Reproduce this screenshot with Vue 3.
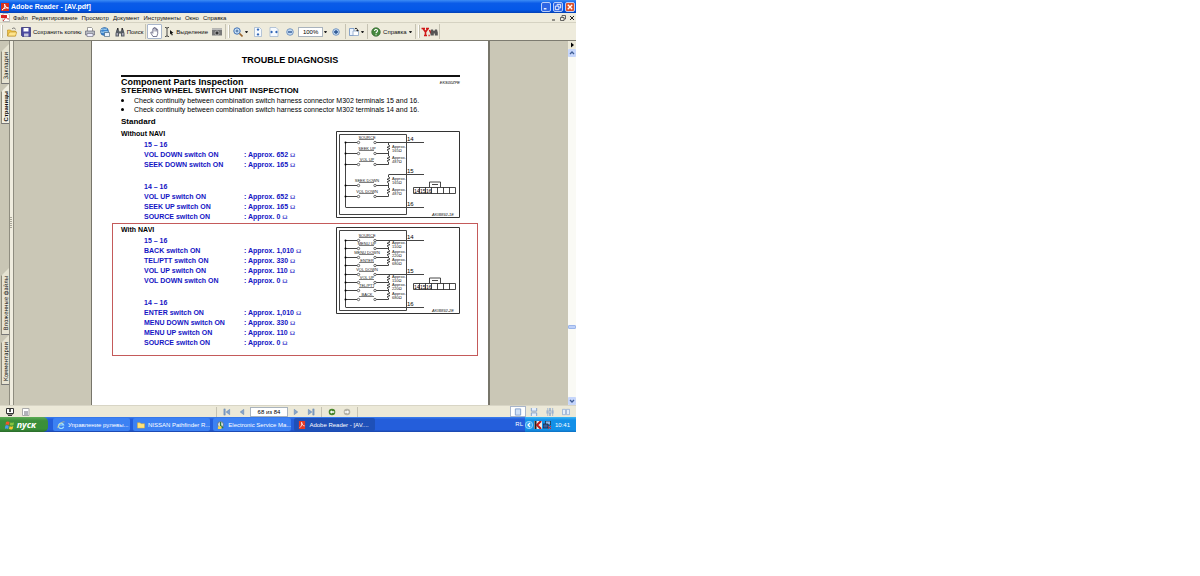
<script setup>
import { ref } from 'vue'

const menus = ['Файл', 'Редактирование', 'Просмотр', 'Документ', 'Инструменты', 'Окно', 'Справка']
const topTabs = [{ t: 'Закладки' }, { t: 'Страницы', on: true }]
const bottomTabs = ['Вложенные файлы', 'Комментарии']
const zoom = ref('100%')
const pageNo = ref('68 из 84')

const sections = [
  {
    title: 'Without NAVI',
    marked: false,
    groups: [
      { pins: '15 – 16', rows: [['VOL DOWN', '652'], ['SEEK DOWN', '165']] },
      { pins: '14 – 16', rows: [['VOL UP', '652'], ['SEEK UP', '165'], ['SOURCE', '0']] },
    ],
    fig: {
      code: 'AKIB892-1E',
      rows: [
        { y: 11, t: 'SOURCE' }, { y: 22, t: 'SEEK UP' }, { y: 33, t: 'VOL UP' },
        { y: 54, t: 'SEEK DOWN' }, { y: 65, t: 'VOL DOWN' },
      ],
      buses: [[11, 33], [43, 65]],
      pins: [{ y: 11, x: 39, n: 14 }, { y: 43, x: 52, n: 15 }, { y: 76, x: 9, n: 16 }],
      res: [{ y: 17, v: 165 }, { y: 28, v: 487 }, { y: 49, v: 165 }, { y: 60, v: 487 }],
    },
  },
  {
    title: 'With NAVI',
    marked: true,
    groups: [
      { pins: '15 – 16', rows: [['BACK', '1,010'], ['TEL/PTT', '330'], ['VOL UP', '110'], ['VOL DOWN', '0']] },
      { pins: '14 – 16', rows: [['ENTER', '1,010'], ['MENU DOWN', '330'], ['MENU UP', '110'], ['SOURCE', '0']] },
    ],
    fig: {
      code: 'AKIB892-2E',
      rows: [
        { y: 13, t: 'SOURCE' }, { y: 21, t: 'MENU UP' }, { y: 30, t: 'MENU DOWN' }, { y: 38, t: 'ENTER' },
        { y: 47, t: 'VOL DOWN' }, { y: 55, t: 'VOL UP' }, { y: 63, t: 'TEL/PTT' }, { y: 72, t: 'BACK' },
      ],
      buses: [[13, 38], [47, 72]],
      pins: [{ y: 13, x: 39, n: 14 }, { y: 47, x: 39, n: 15 }, { y: 80, x: 9, n: 16 }],
      res: [{ y: 17, v: 110 }, { y: 26, v: 220 }, { y: 34, v: 680 }, { y: 51, v: 110 }, { y: 59, v: 220 }, { y: 68, v: 680 }],
    },
  },
]
</script>

<template>
  <div class="desktop">
    <header class="titlebar">
      <svg class="ic8" viewBox="0 0 8 8"><rect width="8" height="8" fill="#d8301c" /><path d="M1 7C4 5 4 3 3.500 1C4 4 6 5 7.500 5C5 4.500 3 5 1 7" fill="none" stroke="#fff" /></svg>
      <h1>Adobe Reader - [AV.pdf]</h1>
      <div class="winbtns">
        <button aria-label="Свернуть"><svg viewBox="0 0 9 9"><path d="M2 6.500h3" stroke="#fff" stroke-width="1.500" /></svg></button>
        <button aria-label="Восстановить"><svg viewBox="0 0 9 9"><path d="M3.500 3V1.500h4v4H6M1.500 3.500h4v4h-4z" fill="none" stroke="#fff" /></svg></button>
        <button class="close" aria-label="Закрыть"><svg viewBox="0 0 9 9"><path d="M2 2l5 5M7 2l-5 5" stroke="#fff" stroke-width="1.500" /></svg></button>
      </div>
    </header>

    <nav class="menubar">
      <svg class="ic9" viewBox="0 0 9 9"><path d="M2 .5h5l1.500 1.500v6.500H2z" fill="#fff" stroke="#999" stroke-width=".6" /><path d="M0 2h6v3H0z" fill="#d22" /><path d="M2 8C4 6 5 4 4.500 3C5 5 6 6 8 6" fill="none" stroke="#c22" stroke-width=".9" /></svg>
      <button v-for="m in menus" :key="m">{{ m }}</button>
      <div class="docbtns">
        <button aria-label="Свернуть документ"><svg viewBox="0 0 8 8"><path d="M2 6h3" stroke="#333" /></svg></button>
        <button aria-label="Восстановить документ"><svg viewBox="0 0 8 8"><path d="M3 3V1.500h3.500V5H5M1.500 3.500H5V6.500H1.500z" fill="none" stroke="#444" stroke-width=".8" /></svg></button>
        <button aria-label="Закрыть документ"><svg viewBox="0 0 8 8"><path d="M2 2l4 4M6 2l-4 4" stroke="#222" /></svg></button>
      </div>
    </nav>

    <div class="toolbar">
      <i class="grip"></i>
      <button aria-label="Открыть"><svg viewBox="0 0 10 10"><path d="M.5 9V3h3l1 1h4v5z" fill="#f5c94a" stroke="#b88a1c" stroke-width=".6" /><path d="M.5 9l2-4h7.300l-1.300 4z" fill="#ffe58c" stroke="#b88a1c" stroke-width=".6" /><path d="M5 2c1-1.500 3-1.500 3.500.5" fill="none" stroke="#555" stroke-width=".7" /></svg></button>
      <button class="wide"><svg viewBox="0 0 10 10"><path d="M.5.500h9v9h-8l-1-1z" fill="#4b49a0" stroke="#2d2b70" stroke-width=".7" /><path d="M2.500 1h5v3.500h-5z" fill="#fff" /><path d="M3 6.500h4.500v3H3z" fill="#c9c9dd" /></svg>Сохранить копию</button>
      <button aria-label="Печать"><svg viewBox="0 0 10 10"><path d="M2.500 4V.5h4l1 1V4" fill="#fff" stroke="#777" stroke-width=".7" /><path d="M.5 4h9v4h-9z" fill="#b9bdc4" stroke="#667" stroke-width=".7" /><path d="M2 6.500h6v3H2z" fill="#eef" stroke="#667" stroke-width=".6" /></svg></button>
      <button aria-label="Веб"><svg viewBox="0 0 10 10"><circle cx="4.500" cy="4.500" r="4" fill="#3d86cf" stroke="#245c9a" stroke-width=".6" /><path d="M1 3c2-2 3 0 6-1M1 5c2 1 4-1 7 0" fill="none" stroke="#bfe2f5" /><path d="M4.500 5.500h5v4h-5z" fill="#eaf2fa" stroke="#357" stroke-width=".6" /></svg></button>
      <button class="wide"><svg viewBox="0 0 10 10"><path d="M1.500 2.500h2l1 2h1l1-2h2l1 4v3H6V6.500H4v3H.5v-3z" fill="#555b63" /><path d="M2 1h1.500v2H2zM6.500 1H8v2H6.500z" fill="#333" /><path d="M1.500 6h1.500v2.500H1.500zM7 6h1.500v2.500H7z" fill="#aab" /></svg>Поиск</button>
      <i class="sep"></i>
      <button class="on" aria-label="Рука"><svg viewBox="0 0 10 10"><path d="M3 9.500L.8 6c-.4-.9.600-1.300 1.200-.5l.8.800V2c0-.9 1.200-.9 1.200 0V1c0-.9 1.300-.9 1.300 0v.7c0-.8 1.200-.8 1.200.1v.9c0-.8 1.200-.7 1.200.2v3.600L6.800 9.500z" fill="#fff" stroke="#446" stroke-width=".7" /><path d="M4 2v2.500M5.300 2v2.500M6.500 2.500v2" stroke="#446" stroke-width=".5" /></svg></button>
      <button class="wide"><svg viewBox="0 0 10 10"><path d="M1 .5h1l1 .7 1-.7h1M3 1v8M1 9.500h1l1-.7 1 .7h1" fill="none" stroke="#222" stroke-width=".8" /><path d="M6 3l3.500 3H8l.8 2-1 .4L7 6.500 6 7.500z" fill="#111" /></svg>Выделение</button>
      <button aria-label="Снимок"><svg viewBox="0 0 10 10"><path d="M0 1.500h10v7H0z" fill="#777" /><path d="M0 1.500h10v1.500H0z" fill="#bbb" /><circle cx="5" cy="6" r="2" fill="#333" stroke="#ddd" stroke-width=".6" /></svg></button>
      <i class="sep"></i><i class="grip"></i>
      <button class="drop" aria-label="Увеличение"><svg viewBox="0 0 10 10"><circle cx="4" cy="4" r="3.200" fill="#cfe6fb" stroke="#3f6fb0" /><path d="M6.500 6.500L9.500 9.500" stroke="#98642a" stroke-width="1.600" /><path d="M2.500 4h3M4 2.500v3" stroke="#25528e" stroke-width=".8" /></svg><b class="arr"></b></button>
      <button aria-label="Страница целиком"><svg viewBox="0 0 10 10"><path d="M1.500.500h5l2 2v7h-7z" fill="#f6faff" stroke="#9ab0cc" stroke-width=".7" /><path d="M5 1l1.500 2h-3zM5 9L3.500 7h3z" fill="#2b62b5" /><path d="M5 3v1M5 6v1" stroke="#2b62b5" /></svg></button>
      <button aria-label="По ширине"><svg viewBox="0 0 10 10"><path d="M1 .5h6l2 2v7H1z" fill="#f6faff" stroke="#9ab0cc" stroke-width=".7" /><path d="M1 5l2-1.500v3zM9 5L7 3.500v3z" fill="#2b62b5" /><path d="M3 5h1M6 5h1" stroke="#2b62b5" /></svg></button>
      <button aria-label="Уменьшить"><svg viewBox="0 0 10 10"><circle cx="5" cy="5" r="3.300" fill="#c5dbf2" stroke="#6d90bd" stroke-width=".9" /><path d="M3 5h4" stroke="#24508e" stroke-width="1.300" /></svg></button>
      <input v-model="zoom" class="zoom" aria-label="Масштаб" />
      <button class="mini" aria-label="Список масштабов"><b class="arr"></b></button>
      <button aria-label="Увеличить"><svg viewBox="0 0 10 10"><circle cx="5" cy="5" r="3.300" fill="#c5dbf2" stroke="#6d90bd" stroke-width=".9" /><path d="M3 5h4M5 3v4" stroke="#24508e" stroke-width="1.300" /></svg></button>
      <i class="sep"></i>
      <button class="drop" aria-label="Повернуть"><svg viewBox="0 0 10 10"><path d="M.5 1.500h4.500v7H.5z" fill="#eef5ff" stroke="#6b8fc0" stroke-width=".8" /><path d="M4 4h5.500v4.500H4z" fill="#fff" stroke="#8aa5c8" stroke-width=".8" /><path d="M6 1.500c2-.5 2.500.500 2.500 2" fill="none" stroke="#222" /><path d="M7 3h3L8.500 4.500z" fill="#222" /></svg><b class="arr"></b></button>
      <i class="sep"></i>
      <button class="wide drop"><svg viewBox="0 0 10 10"><circle cx="5" cy="5" r="4.300" fill="#45883c" stroke="#2a5c26" stroke-width=".6" /><path d="M3.500 4c0-2.200 3.200-2 3 0C6.400 5 5 5 5 6.300M5 7.200v1" fill="none" stroke="#fff" stroke-width="1.100" /></svg>Справка<b class="arr"></b></button>
      <i class="sep"></i><i class="grip"></i>
      <button class="yahoo" aria-label="Yahoo"><svg viewBox="0 0 17 10"><path d="M.5 1.500h3.500M5 1.500h3M2 1.500l2.500 3.500v3M7 1.500L4.500 5M3 8.500h3" fill="none" stroke="#d01818" stroke-width="1.600" /><path d="M8.500 3L10 6.500M7.500 8.500h1.200" stroke="#d01818" stroke-width="1.500" /><path d="M10 2.500h2l.7 1.500h.6L14 2.500h2l.8 3v3h-3v-2h-1v2H9.500V5.500z" fill="#555" /></svg></button>
      <i class="sep"></i>
    </div>

    <div class="work">
      <div class="tabs">
        <button v-for="t in topTabs" :key="t.t" :class="{ active: t.on }"><span>{{ t.t }}</span></button>
        <i class="fill"></i>
        <button v-for="(t, i) in bottomTabs" :key="t" :class="{ long: i === 0, mid: i === 1 }"><span>{{ t }}</span></button>
      </div>
      <div class="splitter"><i></i></div>

      <main class="canvas">
        <article class="paper">
          <h2>TROUBLE DIAGNOSIS</h2>
          <div class="body">
            <div class="intro">
              <h3>Component Parts Inspection</h3>
              <em>EKS00ZPE</em>
            </div>
            <h4>STEERING WHEEL SWITCH UNIT INSPECTION</h4>
            <ul>
              <li>Check continuity between combination switch harness connector M302 terminals 15 and 16.</li>
              <li>Check continuity between combination switch harness connector M302 terminals 14 and 16.</li>
            </ul>
            <h4 class="std">Standard</h4>
          </div>

          <section v-for="s in sections" :key="s.title" :class="{ marked: s.marked }">
            <div class="spec">
              <h5>{{ s.title }}</h5>
              <table v-for="g in s.groups" :key="g.pins">
                <caption>{{ g.pins }}</caption>
                <tbody>
                  <tr v-for="r in g.rows" :key="r[0]">
                    <th scope="row">{{ r[0] }} switch ON</th>
                    <td>: Approx. {{ r[1] }} <span class="ohm">Ω</span></td>
                  </tr>
                </tbody>
              </table>
            </div>
            <svg class="fig" viewBox="0 0 124 87">
              <g fill="none" stroke="#444" stroke-width="1">
                <path d="M.5.500h123v86H.5z" stroke="#333" />
                <path d="M3.500 3.500h67v80h-67z" />
                <path :d="`M9.500 ${s.fig.rows[0].y + .5}V${s.fig.pins[2].y + .5}`" />
                <path v-for="b in s.fig.buses" :key="b[0]" :d="`M52.500 ${b[0] + .5}V${b[1] + .5}`" />
                <path v-for="p in s.fig.pins" :key="p.n" :d="`M${p.x + 1} ${p.y + .5}H88`" />
                <path v-for="r in s.fig.rows" :key="r.t" :d="`M9.500 ${r.y + .5}H21M40 ${r.y + .5}H52.500`" />
              </g>
              <g v-for="r in s.fig.rows" :key="'s' + r.t">
                <circle cx="22.500" :cy="r.y + .5" r="1.200" class="contact" />
                <circle cx="39" :cy="r.y + .5" r="1.200" class="contact" />
                <circle cx="9.500" :cy="r.y + .5" r="1" />
                <path :d="`M23 ${r.y - 2.5}H38`" stroke="#444" stroke-width=".7" />
                <text x="31" :y="r.y - 3" text-anchor="middle" class="lbl">{{ r.t }}</text>
              </g>
              <g v-for="r in s.fig.res" :key="'r' + r.y">
                <path :d="`M52.500 ${r.y - 3}v6`" stroke="#fff" stroke-width="2" />
                <path :d="`M52.500 ${r.y - 3}l1.500 1-3 1.300 3 1.300-3 1.300 1.500 1`" fill="none" stroke="#222" stroke-width=".8" />
                <text x="56" :y="r.y" class="lbl">Approx.</text>
                <text x="56" :y="r.y + 4" class="lbl">{{ r.v }}Ω</text>
              </g>
              <text v-for="p in s.fig.pins" :key="'p' + p.n" x="71" :y="p.y - 1" class="pin">{{ p.n }}</text>
              <path d="M77.500 56.500h42v6h-42zM83.500 56v7M89.500 56v7M95.500 56v7M101.500 56v7M107.500 56v7M113.500 56v7M93.500 56v-5h11v5M96 53.500h6" fill="none" stroke="#333" stroke-width=".9" />
              <text x="78" y="62" class="cell">14</text><text x="84" y="62" class="cell">15</text><text x="90" y="62" class="cell">16</text>
              <text x="118" y="85" text-anchor="end" class="code">{{ s.fig.code }}</text>
            </svg>
          </section>
        </article>
      </main>

      <div class="scroll">
        <button class="play" aria-label="Меню"><svg viewBox="0 0 8 8"><path d="M3 1.500L6 4L3 6.500z" /></svg></button>
        <button aria-label="Вверх"><svg viewBox="0 0 8 8"><path d="M2 5l2-2 2 2" fill="none" stroke="#3f5d96" stroke-width="1.300" /></svg></button>
        <i class="track upper"></i>
        <i class="thumb"></i>
        <i class="track"></i>
        <button aria-label="Вниз"><svg viewBox="0 0 8 8"><path d="M2 3l2 2 2-2" fill="none" stroke="#3f5d96" stroke-width="1.300" /></svg></button>
      </div>
    </div>

    <div class="status">
      <div class="left">
        <button aria-label="Полный экран"><svg viewBox="0 0 8 8"><path d="M.5.500h7v5h-7zM2 7.500h4M1 6h6" fill="#fff" stroke="#333" /><path d="M3 1h2v3H3z" fill="#555" /></svg></button>
        <button aria-label="Панели"><svg viewBox="0 0 8 8"><path d="M.5.500h6.500v7H.5z" fill="#fff" stroke="#aaa" /><path d="M2 4h4M2 6h4" stroke="#667" /></svg></button>
      </div>
      <div class="pager">
        <button aria-label="Первая"><svg viewBox="0 0 9 8"><path d="M1 .5h1.500v7H1zM7.500 1v6L3.500 4z" fill="#86a5cc" stroke="#5478a8" stroke-width=".5" /></svg></button>
        <button aria-label="Назад"><svg viewBox="0 0 9 8"><path d="M6.500 1v6L2.500 4z" fill="#86a5cc" stroke="#5478a8" stroke-width=".5" /></svg></button>
        <input v-model="pageNo" aria-label="Страница" />
        <button aria-label="Вперёд"><svg viewBox="0 0 9 8"><path d="M2.500 1v6L6.500 4z" fill="#86a5cc" stroke="#5478a8" stroke-width=".5" /></svg></button>
        <button aria-label="Последняя"><svg viewBox="0 0 9 8"><path d="M6.500.500H8v7H6.500zM1.500 1v6L5.500 4z" fill="#86a5cc" stroke="#5478a8" stroke-width=".5" /></svg></button>
        <i class="sep"></i>
        <button aria-label="Предыдущий вид"><svg viewBox="0 0 9 8"><circle cx="4.500" cy="4" r="3.700" fill="#47852c" /><path d="M2 4l2.300-2v1.200H7v1.600H4.300V6z" fill="#fff" /></svg></button>
        <button aria-label="Следующий вид"><svg viewBox="0 0 9 8"><circle cx="4.500" cy="4" r="3.700" fill="#b5b3a6" /><path d="M7 4L4.700 2v1.200H2v1.600h2.700V6z" fill="#fff" /></svg></button>
        <i class="sep"></i>
      </div>
      <div class="views">
        <button class="on" aria-label="Одна страница"><svg viewBox="0 0 9 9"><path d="M1.500 1h6v7h-6z" fill="#cfe0f7" stroke="#7d9cc9" /></svg></button>
        <button aria-label="Непрерывно"><svg viewBox="0 0 9 9"><path d="M1.500 0v3.500h6V0M1.500 9V5.500h6V9" fill="#e5eefa" stroke="#7d9cc9" /></svg></button>
        <button aria-label="Непрерывно, разворот"><svg viewBox="0 0 9 9"><path d="M0 3.500h9M0 5.500h9M2 0v9M4 0v3.500M5 0v3.500M4 5.500V9M5 5.500V9M7.500 0v9" fill="none" stroke="#7d9cc9" stroke-width=".7" /></svg></button>
        <button aria-label="Разворот"><svg viewBox="0 0 9 9"><path d="M.5 1.500h3.500v6H.5zM5 1.500h3.500v6H5z" fill="#e5eefa" stroke="#8aa6cf" stroke-width=".8" /></svg></button>
      </div>
    </div>

    <footer class="taskbar">
      <button class="start"><svg viewBox="0 0 10 10"><path d="M1 2c1.500-1 2.500-.5 3.500 0L4 5C3 4.500 2 4.200.5 5z" fill="#f2552c" /><path d="M5.300 2.400c1.200.6 2.500.6 3.700-.2L8.500 5C7 6 6 5.500 4.800 5z" fill="#8ac43f" /><path d="M.3 5.800c1.500-.8 2.500-.4 3.500 0L3.200 9C2.200 8.400 1 8.200-.2 9z" fill="#4a9af0" /><path d="M4.600 6.200c1.200.6 2.400.6 3.700-.2L7.600 9C6.300 9.800 5 9.500 4 9z" fill="#fbc52d" /></svg>пуск</button>
      <div class="tasks">
        <button><svg viewBox="0 0 9 9"><path d="M7.500 6.500A3 3 0 1 1 7.500 4.500H2.500" fill="none" stroke="#9fe0ff" stroke-width="1.400" /><path d="M1 8C-.5 7 5 0 8.500 1" fill="none" stroke="#f4d35a" stroke-width=".7" /></svg><span>Управление рулевы...</span></button>
        <button><svg viewBox="0 0 9 9"><path d="M.5 8V2h3l1 1h4v5z" fill="#ffe27a" stroke="#d3a93a" stroke-width=".6" /></svg><span>NISSAN Pathfinder R...</span></button>
        <button><svg viewBox="0 0 9 9"><circle cx="4" cy="4" r="3.300" fill="#d5dee4" stroke="#456" stroke-width=".7" /><path d="M4 1v4l3 3" stroke="#2a7d3d" stroke-width="1.400" fill="none" /><path d="M1 6h4v3H1z" fill="#f2d24c" /></svg><span>Electronic Service Ma...</span></button>
        <button class="on"><svg viewBox="0 0 9 9"><path d="M1 0h7v9H1z" fill="#e33a25" /><path d="M2 7.500C4.500 5.500 4.500 3 4 1.500C4.500 4.500 6 5.500 7.500 5.500" fill="none" stroke="#fff" stroke-width=".9" /></svg><span>Adobe Reader - [AV....</span></button>
      </div>
      <div class="lang">RL</div>
      <div class="tray">
        <svg class="ic8" viewBox="0 0 8 8"><circle cx="4" cy="4" r="3.700" fill="#39a7f2" stroke="#c5ecff" stroke-width=".6" /><path d="M5 2L3 4l2 2" fill="none" stroke="#fff" stroke-width="1.200" /></svg>
        <svg class="ic8" viewBox="0 0 8 8"><path d="M0 0h8v8H0z" fill="#e8e8e8" /><path d="M1.500 0v8" stroke="#222" stroke-width="2" /><path d="M7 0L3 4l4 4" fill="none" stroke="#c01818" stroke-width="2" /></svg>
        <svg class="ic8" viewBox="0 0 8 8"><path d="M2.500 0h5v4h-5z" fill="#8bb4e8" stroke="#123" stroke-width=".7" /><path d="M0 3h5v4H0z" fill="#395c9c" stroke="#123" stroke-width=".7" /><path d="M5 5l3 3M8 5L5 8" stroke="#d22" /></svg>
        <time>10:41</time>
      </div>
    </footer>
  </div>
</template>

<style>
body { margin: 0; background: #fff; }
</style>

<style scoped>
* { box-sizing: border-box; }
.desktop { width: 48vw; min-width: 576px; min-height: 75vh; display: flex; flex-direction: column; font: 6px/8px "Liberation Sans", Arial, sans-serif; color: #111; background: #ece9d8; }
button { font: inherit; color: inherit; border: 0; background: none; padding: 0; margin: 0; display: flex; align-items: center; justify-content: center; white-space: nowrap; }
input { font: inherit; border: 1px solid #a9b3bd; background: #fff; padding: 0; text-align: center; min-width: 0; }
svg { display: block; flex: none; }
i { display: block; flex: none; }
h1, h2, h3, h4, h5, ul { margin: 0; padding: 0; }
.ic8 { width: 8px; height: 8px; }
.ic9 { width: 9px; height: 9px; }

.titlebar { height: 13px; display: flex; align-items: center; gap: 2px; padding: 0 1px; background: linear-gradient(#3c8cf5, #0a5be8 25%, #0458e8 75%, #0340b5); color: #fff; }
.titlebar h1 { font-size: 7px; line-height: 10px; flex: 1; }
.winbtns { display: flex; gap: 2px; }
.winbtns button { width: 10px; height: 10px; border: 1px solid #b9cdf8; border-radius: 2px; background: #2f66e4; }
.winbtns svg { width: 8px; height: 8px; }
.winbtns .close { background: #dd5029; }

.menubar { height: 9px; display: flex; align-items: center; gap: 4px; padding-left: 1px; background: #efecdd; }
.menubar > svg { margin-right: -1px; }
.docbtns { margin-left: auto; display: flex; gap: 1px; }
.docbtns svg { width: 8px; height: 8px; }

.toolbar { height: 19px; display: flex; align-items: center; border-top: 1px solid #d5d2c2; border-bottom: 1px solid #7d7b70; background: #eeebdc; }
.toolbar button { height: 15px; min-width: 15px; gap: 2px; }
.toolbar .drop ~ button { min-width: 16px; }
.toolbar button svg { width: 10px; height: 10px; }
.toolbar .wide { padding: 0 1px 0 2px; }
.toolbar .drop { padding: 0 2px; }
.toolbar .drop ~ .mini { min-width: 5px; }
.toolbar .on { border: 1px solid #a9b6cb; background: #fff; border-radius: 1px; }
.toolbar .yahoo svg { width: 17px; }
.arr { border: 1px solid transparent; border-top: 2px solid #222; border-bottom: 0; width: 3px; height: 2px; }
.grip { width: 2px; height: 13px; border-left: 1px solid #fff; border-right: 1px solid #c2bfae; margin: 0 1px; }
.sep { width: 1px; height: 15px; background: #c5c2b2; margin: 0 1px; }
.zoom { width: 25px; height: 10px; }

.work { flex: 1; display: flex; background: #cac7b6; }
.tabs { width: 10px; display: flex; flex-direction: column; padding: 3px 0 20px 1px; background: #c9c6b5; border-right: 1px solid #8f8d80; font-family: "DejaVu Sans Condensed", sans-serif; }
.tabs button { height: 40px; background: #e6e3d2; clip-path: polygon(0 8px, 100% 0, 100% 100%, 0 100%); border-left: 1px solid #8c897a; border-bottom: 1px solid #777; padding-top: 5px; }
.tabs .active { background: #f1efe2; }
.tabs .long { height: 67px; }
.tabs .mid { height: 50px; }
.tabs span { writing-mode: vertical-rl; transform: rotate(180deg); line-height: 8px; }
.tabs .active span { font-family: "Liberation Sans", sans-serif; font-weight: bold; }
.fill { flex: 1; }
.splitter { width: 4px; background: #f0eddf; border-right: 1px solid #8f8d80; display: flex; align-items: center; }
.splitter i { width: 2px; height: 12px; background: repeating-linear-gradient(#a9a698 0 1px, #f0eddf 1px 2px); }

.canvas { flex: 1; min-width: 0; display: flex; padding: 0 78px 0 77px; }
.paper { flex: 1; min-width: 0; background: #fff; border-left: 1px solid #77756a; border-right: 2px solid #77756a; padding: 14px 10px 0 20px; color: #000; }
.paper h2 { font-size: 9px; line-height: 10px; text-align: center; padding-right: 10px; }
.body { margin: 10px 18px 1px 9px; border-top: 2px solid #111; }
.intro { display: flex; justify-content: space-between; align-items: center; padding-top: 1px; }
.intro h3 { font-size: 9px; line-height: 9px; }
.intro em { font-size: 4px; line-height: 5px; }
.paper h4 { font-size: 8px; line-height: 8px; }
.paper ul { list-style: none; font-size: 7px; line-height: 9px; padding-top: 1px; }
.paper li { display: flex; align-items: center; white-space: nowrap; }
.paper li::before { content: ""; width: 3px; height: 3px; border-radius: 50%; background: #000; margin-right: 10px; }
.paper .std { line-height: 10px; margin-top: 3px; margin-bottom: -1px; }
section { display: flex; justify-content: space-between; align-items: flex-start; border: 1px solid transparent; padding: 3px 17px 0 8px; }
.marked { border-color: #c45a5a; padding-bottom: 7px; }
.spec h5 { font-size: 7px; line-height: 5px; margin-bottom: 4px; }
table { border-collapse: collapse; margin-left: 23px; font-size: 7px; line-height: 10px; font-weight: bold; color: #1414c4; }
table + table { margin-top: 12px; }
caption { text-align: left; line-height: 10px; }
th, td { padding: 0; height: 10px; text-align: left; white-space: nowrap; }
th { width: 100px; }
.ohm { font-family: "Liberation Serif", serif; font-weight: normal; }
.fig { width: 124px; height: 87px; }
.contact { fill: #fff; stroke: #333; stroke-width: .7px; }
.lbl, .code { font-size: 4px; fill: #222; }
.code { font-style: italic; }
.pin { font-size: 6px; }
.cell { font-size: 5px; }

.scroll { width: 8px; display: flex; flex-direction: column; background: #f7f6f0; }
.scroll button { width: 8px; height: 8px; background: #c6d6fb; border-radius: 1px; }
.scroll .play { background: #ece9d8; }
.scroll svg { width: 8px; height: 8px; }
.track { flex: 69; background: #fafaf5; }
.track.upper { flex: 271; }
.thumb { height: 4px; background: #bdd0f8; border: 1px solid #9cb6ea; border-radius: 1px; }

.status { height: 12px; display: grid; grid-template-columns: 216px 1fr auto; align-items: center; border-top: 1px solid #d8d5c5; background: #ece9d8; }
.left { display: flex; gap: 8px; padding-left: 6px; }
.status button svg { width: 8px; height: 8px; }
.pager { display: flex; align-items: center; gap: 7px; border-left: 1px solid #c5c2b2; padding-left: 6px; }
.pager input { width: 38px; height: 10px; margin: 0 -3px; }
.pager .sep { height: 10px; margin: 0 -1px; }
.views { display: flex; gap: 0; padding-right: 2px; }
.views button { width: 16px; height: 11px; }
.views .on { background: #fff; border: 1px solid #a9b6cb; }

.taskbar { height: 15px; display: flex; background: linear-gradient(#3b80f0, #245edb 15%, #245edb 85%, #1a44a8); color: #fff; }
.start { width: 48px; gap: 2px; background: linear-gradient(#5eac56, #3c8f3a 25%, #389038 80%, #2a6a2a); border-radius: 0 5px 5px 0; font: italic bold 9px/12px "Open Sans", sans-serif; }
.taskbar .start { padding: 0 7px 0 0; }
.start svg { width: 10px; height: 10px; }
.tasks { flex: 1; display: flex; gap: 3px; padding: 1px 0 1px 5px; }
.tasks button { flex: 0 0 77px; justify-content: flex-start; gap: 3px; padding-left: 4px; background: #3c81f3; border-radius: 2px; }
.tasks .on { flex-basis: 81px; background: #1e50b8; }
.tasks svg { width: 8px; height: 8px; }
.tasks span { overflow: hidden; }
.lang { padding: 0 2px; line-height: 15px; }
.tray { display: flex; align-items: center; gap: 1px; padding: 0 6px 0 0; background: linear-gradient(#3bb5f5, #1390e8 20%, #1390e8 85%, #0c6fc0); }
.tray time { margin-left: 3px; }
</style>
